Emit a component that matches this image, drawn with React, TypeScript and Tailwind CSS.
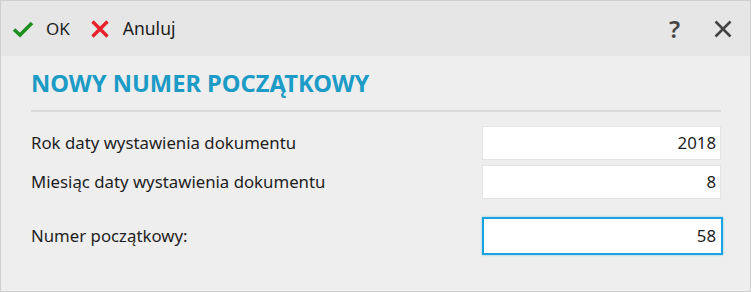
import React from "react";

export default function App() {
  return (
    <div
      className="w-[751px] h-[292px] bg-[#eeeeee] border border-[#cfcfcf] flex flex-col text-[#1e1e1e]"
      style={{ fontFamily: '"Segoe UI", "Noto Sans", sans-serif' }}
    >
      {/* Toolbar */}
      <div className="h-[55px] bg-[#e6e6e6] flex items-center px-[11px] shrink-0">
        <button className="flex items-center gap-[12px] text-[17px]">
          <svg width="22" height="18" viewBox="0 0 22 18">
            <path d="M2 9.5 L8 15 L20 3" fill="none" stroke="#1f8f1f" strokeWidth="3.6" />
          </svg>
          <span>OK</span>
        </button>
        <button className="flex items-center gap-[14px] text-[17.5px] ml-[21px]">
          <svg width="18" height="18" viewBox="0 0 18 18">
            <path d="M1.5 1.5 L16.5 16.5 M16.5 1.5 L1.5 16.5" fill="none" stroke="#e8222d" strokeWidth="3.4" />
          </svg>
          <span>Anuluj</span>
        </button>
        <div className="flex-1" />
        <span className="text-[24px] text-[#444] font-semibold mr-[34px] leading-none">?</span>
        <svg width="18" height="18" viewBox="0 0 18 18" className="mr-[7px]">
          <path d="M1.5 1.5 L16.5 16.5 M16.5 1.5 L1.5 16.5" fill="none" stroke="#444" strokeWidth="2.6" />
        </svg>
      </div>

      {/* Content */}
      <div className="pl-[30px] pr-[29px] pt-[12px]">
        <h1 className="text-[23.7px] font-bold text-[#1b9bc6] leading-[30px] pb-[12px] border-b-2 border-[#d9d9d9]">
          NOWY NUMER POCZĄTKOWY
        </h1>

        <div className="mt-[14px] flex flex-col text-[16.8px]">
          <Row label="Rok daty wystawienia dokumentu" value="2018" />
          <div className="h-[5px]" />
          <Row label="Miesiąc daty wystawienia dokumentu" value="8" />
          <div className="h-[18px]" />
          <div className="flex items-center h-[38px]">
            <span className="flex-1">Numer początkowy:</span>
            <div className="w-[241px] h-[38px] bg-white border-2 border-[#1aa3e0] shadow-[0_0_2px_#7ccaf0] flex items-center justify-end pr-[5px] -mr-[2px]">
              58
            </div>
          </div>
        </div>
      </div>
    </div>
  );
}

function Row({ label, value }: { label: string; value: string }) {
  return (
    <div className="flex items-center h-[34px]">
      <span className="flex-1">{label}</span>
      <div className="w-[239px] h-[34px] bg-white border border-[#e4e4e4] flex items-center justify-end pr-[4px]">
        {value}
      </div>
    </div>
  );
}
